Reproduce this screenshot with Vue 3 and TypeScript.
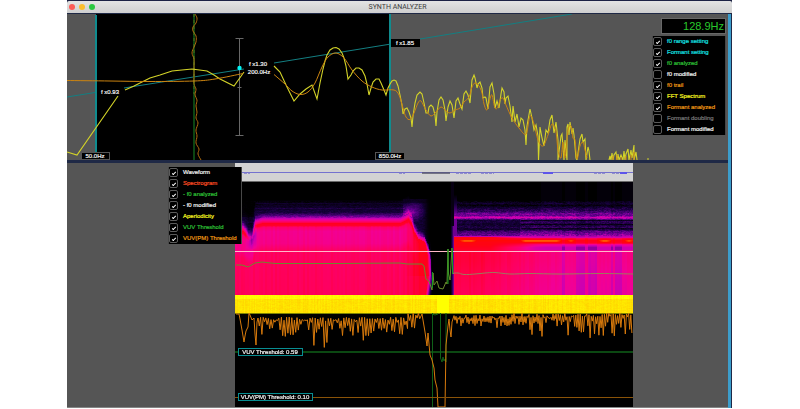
<script setup lang="ts">
import { onMounted, reactive, ref } from 'vue'

interface Layer {
  id: string
  label: string
  tone: string
  on: boolean
}
type Point = [number, number]

const analysisLayers = reactive<Layer[]>([
  { id: 'range', label: 'f0 range setting', tone: 'cyan', on: true },
  { id: 'formant', label: 'Formant setting', tone: 'cyan', on: true },
  { id: 'f0', label: 'f0 analyzed', tone: 'green', on: true },
  { id: 'f0mod', label: 'f0 modified', tone: 'white', on: false },
  { id: 'trail', label: 'f0 trail', tone: 'orange', on: true },
  { id: 'fft', label: 'FFT Spectrum', tone: 'yellow', on: true },
  { id: 'envelope', label: 'Formant analyzed', tone: 'orange', on: true },
  { id: 'doubling', label: 'Formant doubling', tone: 'gray', on: false },
  { id: 'envmod', label: 'Formant modified', tone: 'white', on: false },
])

const timelineLayers = reactive<Layer[]>([
  { id: 'wave', label: 'Waveform', tone: 'white', on: true },
  { id: 'spectrogram', label: 'Spectrogram', tone: 'red', on: true },
  { id: 'tf0', label: '- f0 analyzed', tone: 'green', on: true },
  { id: 'tf0mod', label: '- f0 modified', tone: 'white', on: true },
  { id: 'aperiodicity', label: 'Aperiodicity', tone: 'yellow', on: true },
  { id: 'vuv', label: 'VUV Threshold', tone: 'green', on: true },
  { id: 'vuvpm', label: 'VUV(PM) Threshold', tone: 'orange', on: true },
])

const on = (list: Layer[], id: string) => list.some((l) => l.id === id && l.on)

function line(points: Point[]): string {
  return 'M' + points.map((p) => `${p[0].toFixed(1)} ${p[1].toFixed(1)}`).join('L')
}

// Catmull-Rom spline through the points.
function curve(p: Point[]): string {
  let d = `M${p[0][0]} ${p[0][1]}`
  for (let i = 0; i < p.length - 1; i++) {
    const a = p[Math.max(0, i - 1)]
    const b = p[i]
    const c = p[i + 1]
    const e = p[Math.min(p.length - 1, i + 2)]
    d += `C${(b[0] + (c[0] - a[0]) / 6).toFixed(1)} ${(b[1] + (c[1] - a[1]) / 6).toFixed(1)} ${(c[0] - (e[0] - b[0]) / 6).toFixed(1)} ${(c[1] - (e[1] - b[1]) / 6).toFixed(1)} ${c[0]} ${c[1]}`
  }
  return d
}

function generator(seed: number) {
  let s = seed
  return () => {
    s = (s * 1664525 + 1013904223) % 4294967296
    return s / 4294967296
  }
}

const fftLow = line([[67, 152], [77, 155], [118, 96]]) + line([
  [125, 90], [134, 86], [142, 82], [150, 78], [160, 75], [172, 71], [182, 70], [192, 69], [207, 71], [214, 75], [220, 79], [234, 86], [244, 72],
])
const fftHigh = line([
  [274, 66], [280, 72], [287, 87], [294, 101], [300, 94], [306, 89], [312, 85], [317, 99], [320, 83], [323, 69], [325, 61], [327, 55], [330, 50], [333, 48], [336, 47.5], [339, 49], [342, 53], [344, 58], [346, 66], [348, 79], [351, 75], [353, 71], [356, 68], [359, 68], [362, 70], [365, 76], [367, 84], [369, 95], [371, 88], [373, 82], [376, 79], [379, 79], [381, 83], [384, 90], [386, 95], [388, 88],
  [390, 84], [392, 81], [394, 80], [396, 81], [398, 86], [400, 95], [402, 105], [403, 114], [405, 109], [407, 108], [409, 112], [411, 118], [412, 127], [413, 116], [415, 103], [417, 95], [420, 92], [422, 94], [424, 103], [426, 113], [428, 113],
  [429, 107], [431, 105], [433, 107], [435, 115], [436, 126], [437, 112], [439, 100], [441, 97], [443, 100], [445, 110], [446, 121], [448, 107], [450, 101], [452, 105], [454, 118], [456, 101], [458, 98], [460, 104], [462, 109], [464, 94], [466, 91], [468, 95], [470, 103], [472, 80], [474, 75], [475, 78], [477, 88], [478, 84], [480, 82], [482, 88], [483, 98], [485, 97], [486, 98], [488, 109],
  [490, 87], [492, 83], [494, 94], [495, 108], [497, 101], [499, 108], [501, 94], [502, 88], [504, 92], [505, 104], [506, 98], [508, 96], [510, 106], [512, 122], [513, 106], [515, 122], [517, 114], [519, 127], [521, 118], [523, 120], [525, 130], [526, 145], [527, 126], [528, 120], [530, 109], [532, 118], [534, 130], [536, 125], [538, 136], [538.5, 160], [540, 127], [542, 138], [544, 146], [546, 130], [548, 133], [550, 120],
  [552, 115], [554, 133], [556, 122], [558, 140], [558, 160], [561, 136], [562, 134], [564, 160], [565, 140], [567, 160], [567, 127], [568, 124], [569, 135], [570, 122], [572, 134], [573, 128], [574, 135], [576, 158], [577, 160], [580, 139], [582, 134], [583, 142], [585, 139], [586, 160], [588, 147], [589, 151], [590, 160],
])
const fftTail = line([
  [609, 160], [610, 156], [611, 160], [612, 153], [613, 160], [614, 155], [616, 152], [617, 160], [618, 154], [619, 160], [621, 155], [623, 160], [624, 151], [625, 160], [626, 154], [628, 149], [629, 160], [631, 150], [632, 158], [634, 145], [634, 160], [636, 152], [637, 160],
])
const envLow = curve([[67, 80.5], [110, 81], [150, 81.5], [194, 81], [215, 79], [243, 73.5]])
const envHigh = curve([
  [274, 74.5], [285, 84], [292, 91], [300, 94.5], [308, 92], [315, 83], [322, 67], [328, 57], [336, 53], [344, 58], [352, 70], [362, 81], [372, 87], [382, 90], [394, 90], [399, 95], [403, 108], [406, 117], [410, 119.5], [414, 113], [418, 103], [421, 101], [426, 110], [431, 116], [436, 112], [441, 107], [446, 111], [450, 113], [455, 110], [460, 108], [464, 102], [469, 97],
  [472, 87], [475, 83], [479, 86], [482, 93], [484, 104], [487, 110], [490, 99], [492, 95], [495, 108], [498, 107], [500, 100], [503, 98], [506, 105], [512, 118], [519, 128], [526, 134], [530, 116], [534, 124], [538, 140], [543, 146], [548, 135], [552, 124], [556, 132], [558, 150], [561, 158], [563, 142], [565, 158], [568, 130], [571, 126], [573, 138], [575, 140], [577, 159], [580, 146], [583, 142], [585, 150], [587, 158],
])

const trail = curve([
  [195, 14], [197, 18], [196, 23], [193, 27], [193, 31], [196, 36], [196, 42], [194, 47], [192, 53], [194, 59], [194, 66], [194, 75], [194, 84], [196, 89], [195, 95], [197, 100], [196, 106], [197, 112], [196, 118], [198, 123], [196, 130], [197, 136], [196, 143], [199, 149], [198, 154], [201, 160],
])

const f0Timeline = line([
  [236, 265], [242, 265], [248, 267], [255, 263], [262, 262], [275, 263.5], [340, 263.5], [400, 263], [407, 264], [422, 264], [424, 266], [426, 279], [429, 281], [432, 290], [433, 273], [434, 285], [437, 281], [439, 288], [443, 289], [446, 282], [447, 284], [448, 249], [448.5, 274], [450, 280], [452, 248], [453, 274],
])
const f0Right = curve([[452, 273.5], [458, 273], [464, 274.5], [475, 274], [485, 273], [495, 272.5], [510, 274], [530, 273.5], [560, 274], [600, 273.5], [633, 274]])

function periodicity(): string {
  const rnd = generator(11)
  const pts: Point[] = [[236, 314], [239, 314], [240, 319], [242, 330], [244, 342], [245, 336], [246, 331], [248, 327], [249, 313], [250, 315], [252, 320], [254, 318], [255, 334], [256, 345], [257, 322]]
  const spread = (from: number, to: number, step: number, base: number, dip: number, rare: number) => {
    for (let x = from; x < to; x += step) {
      pts.push([x, base + rnd() * 4])
      const depth = rnd() < 0.1 ? rare * (0.7 + rnd() * 0.4) : dip * rnd()
      pts.push([x + step / 2, base + 3 + depth])
    }
  }
  spread(258, 408, 2.6, 317, 17, 28)
  spread(408, 421, 2.6, 313, 5, 11)
  pts.push([422, 314], [424, 326], [425, 332], [427, 346], [428, 333], [430, 355], [432, 360], [434, 368], [435, 380], [437, 388], [438, 407], [445, 407], [446, 345], [448, 326], [449, 319], [450, 330], [451, 337], [452, 322])
  spread(454, 512, 2, 315, 8, 9)
  spread(512, 525, 2, 313, 9, 14)
  spread(525, 543, 2, 314, 20, 24)
  spread(543, 556, 2, 314, 4, 8)
  spread(556, 632, 2.2, 313, 20, 24)
  return line(pts)
}
const periodicityPath = periodicity()

const palette: [number, number, number, number][] = [
  [0, 0, 0, 0],
  [0.2, 22, 0, 60],
  [0.4, 95, 0, 140],
  [0.55, 200, 0, 180],
  [0.68, 242, 0, 150],
  [0.8, 255, 0, 90],
  [0.9, 255, 0, 30],
  [0.95, 255, 10, 0],
  [1, 255, 90, 0],
]
function shade(v: number): [number, number, number] {
  const t = Math.min(1, Math.max(0, v))
  for (let i = 1; i < palette.length; i++) {
    if (t <= palette[i][0]) {
      const a = palette[i - 1]
      const b = palette[i]
      const k = (t - a[0]) / (b[0] - a[0])
      return [a[1] + (b[1] - a[1]) * k, a[2] + (b[2] - a[2]) * k, a[3] + (b[3] - a[3]) * k]
    }
  }
  return [255, 90, 0]
}
// Piecewise linear lookup.
function lerp(x: number, pts: Point[]): number {
  if (x <= pts[0][0]) return pts[0][1]
  for (let i = 1; i < pts.length; i++) {
    if (x <= pts[i][0]) {
      const k = (x - pts[i - 1][0]) / (pts[i][0] - pts[i - 1][0])
      return pts[i - 1][1] + (pts[i][1] - pts[i - 1][1]) * k
    }
  }
  return pts[pts.length - 1][1]
}

const voicedEdge: Point[] = [[236, 225], [243, 227], [248, 233], [252, 231], [255, 221], [262, 219], [400, 219], [404, 217], [408, 215], [411, 219], [414, 229], [418, 236], [424, 239], [428, 246], [430, 256], [431, 275], [429, 296]]
const voicedBody: Point[] = [[-20, 0], [-14, 0.11], [-7, 0.2], [-4, 0.36], [-1, 0.55], [1, 0.7], [3, 0.82], [4, 0.9], [6, 0.88], [8, 0.76], [12, 0.7], [24, 0.71], [31, 0.79], [70, 0.8]]
const rightBody: Point[] = [[200, 0], [203, 0.13], [205, 0.04], [208, 0.2], [211, 0.28], [213, 0.42], [215, 0.42], [216, 0.5], [217, 0.6], [218, 0.5], [220, 0.25], [222, 0.27], [224, 0.2], [227, 0.28], [229, 0.2], [231, 0.38], [235, 0.48], [237, 0.6], [238, 0.84], [240, 0.94], [242, 0.92], [244, 0.8], [247, 0.66], [249, 0.66], [252, 0.76], [258, 0.76], [275, 0.73], [295, 0.71]]
const stripes: Point[] = [[562, 565], [576, 585], [588, 597], [611, 613], [615, 622]]
const embers: Point[] = [[458, 477], [519, 562], [566, 575], [597, 612], [623, 634]]

function spectrogramLevel(x: number, y: number, n: number, column: number): number {
  if (x < 433) {
    const d = y - lerp(x, voicedEdge)
    let v = lerp(d, voicedBody)
    if (d < -1 && y > 200) v += (n - 0.5) * 0.13
    if (x < 254 && y < 217) v *= 0.4
    if (x > 254 && x < 405 && (y === 203 || y === 208)) v += 0.07
    if (x > 244 && x < 258 && y > 222 && y < 249) {
      v -= 0.4 * Math.max(0, 1 - Math.abs(x - 251) / 6) * Math.max(0, 1 - Math.abs(y - 235) / 15)
    }
    if (x > 402 && x < 430 && d < -2 && y > 198) {
      const near = Math.max(0, 1 - Math.hypot(x - 412, (y - 211) * 1.2) / 14)
      v = Math.max(v, 0.1 + n * 0.12) * Math.max(0, Math.min(1, (430 - x) / 8)) + near * 0.3
      if (y < 203) v *= 0.6
    }
    if (x > 404 && d > 2) v += (0.9 - v) * Math.min(1, (x - 404) / 14) * (y > 275 ? 0.7 : 1)
    const fade = lerp(y, [[180, 430], [240, 428], [255, 431], [275, 432], [295, 429]])
    if (x > fade - 4) v *= Math.max(0, 1 - (x - fade + 4) / 6)
    return v + (d > 6 ? (column - 0.5) * 0.035 : 0)
  }
  if (x < 451) return 0
  if (x < 454) return y > 225 ? 0.42 - (453 - x) * 0.14 : 0.06
  let v = lerp(y, rightBody)
  if (y > 200 && y < 236) v += (n - 0.5) * 0.2
  if (y < 212 && x > 540) v += 0.03
  if (y > 218 && y < 236 && x < 520) v -= 0.07
  if (y > 218 && y < 231 && x > 520 && y % 4 === 0) v -= 0.13
  if (y > 236 && y < 252) {
    const warm = 0.92 - Math.max(0, y - 244) * 0.007
    v += Math.max(0, warm - v) * lerp(x, [[490, 1], [535, 0]])
  }
  if (y >= 252) v += lerp(x, [[455, 0.1], [480, 0.1], [520, 0.03], [560, -0.04], [634, -0.05]])
  if (y > 237 && y < 243) {
    const heatBand = embers.reduce((m, s) => Math.max(m, Math.min(1, Math.max(0, Math.min(x - s[0], s[1] - x) / 6))), 0)
    v += heatBand * (y === 240 || y === 241 ? 0.06 : 0.02)
  }
  if (y > 243 && y < 250 && x > 520) v -= 0.09 * Math.min(1, (x - 520) / 25)
  if (stripes.some((s) => x >= s[0] && x < s[1])) v -= y > 244 ? 0.1 : 0.03
  if (x < 457 && y < 238) v = Math.max(v, 0.42 * Math.min(1, Math.max(0, (y - 194) / 20)))
  return v + (y > 250 ? (column - 0.5) * 0.03 : 0)
}

const heat = ref<HTMLCanvasElement | null>(null)
onMounted(() => {
  const ctx = heat.value?.getContext('2d')
  if (!ctx) return
  const image = ctx.createImageData(398, 132)
  const rnd = generator(5)
  const columns = Array.from({ length: 398 }, () => rnd())
  for (let row = 0; row < 132; row++) {
    let n = 0.5
    for (let col = 0; col < 398; col++) {
      n = n * 0.45 + rnd() * 0.55
      const y = row + 182
      let c: [number, number, number]
      if (y < 295) c = shade(spectrogramLevel(col + 235, y, n, columns[Math.floor(col / 2)]))
      else if (col > 201 && col < 214) c = [255, 255, 0]
      else c = [255, (y < 299 ? 232 : 208) + columns[col] * 15 + n * 22, 0]
      const i = (row * 398 + col) * 4
      image.data[i] = c[0]
      image.data[i + 1] = c[1]
      image.data[i + 2] = c[2]
      image.data[i + 3] = 255
    }
  }
  ctx.putImageData(image, 0, 19)
})
</script>

<template>
  <main class="window">
    <header class="titlebar">
      <div class="lights">
        <button class="light close" type="button" aria-label="Close"></button>
        <button class="light minimize" type="button" aria-label="Minimize"></button>
        <button class="light zoom" type="button" aria-label="Zoom"></button>
      </div>
      <h1 class="title">SYNTH ANALYZER</h1>
    </header>

    <div class="body">
      <section class="analysis">
        <svg class="plot" viewBox="67 14 661 146">
          <rect x="67" y="14" width="661" height="146" fill="#555" />
          <g v-if="on(analysisLayers, 'range')">
            <rect x="96" y="14" width="294" height="146" fill="#000" />
            <rect x="95" y="15" width="2" height="137" fill="#108b8e" />
            <rect x="389" y="14" width="2" height="138" fill="#108b8e" />
          </g>
          <g v-if="on(analysisLayers, 'formant')" fill="none">
            <path d="M67 97L95 92.500M124 88L244 69M274 63L391 44M420 39L572 14" stroke="#137f82" />
            <path d="M239.500 38V136M235.500 38.500h8M237.500 87.500h4M235.500 135.500h8" stroke="#686868" />
          </g>
          <path v-if="on(analysisLayers, 'f0')" d="M194 14V160" stroke="#115c18" stroke-width="1.500" />
          <path v-if="on(analysisLayers, 'trail')" :d="trail" fill="none" stroke="#b06b0e" />
          <path v-if="on(analysisLayers, 'f0')" d="M194 14V94" stroke="#788922" stroke-width=".6" stroke-dasharray="3 3" />
          <g v-if="on(analysisLayers, 'fft')" fill="none" stroke="#d4d428" stroke-width="1.100">
            <path :d="fftLow" />
            <path :d="fftHigh" />
            <path :d="fftTail" />
            <path d="M647 159h2" />
          </g>
          <g v-if="on(analysisLayers, 'envelope')" fill="none" stroke="#cc8410">
            <path :d="envLow" />
            <path :d="envHigh" />
            <path d="M613 160v-4M617 160v-5M621 160v-3M626 160v-4M631 160v-5M634 160v-8" />
          </g>
          <circle cx="239.500" cy="68" r="2.200" fill="#00f6f6" />
          <g class="tag">
            <rect x="391" y="39" width="29" height="8" fill="#000" />
            <rect x="81.500" y="152.500" width="28" height="7" fill="#000" stroke="#555" />
            <rect x="375.500" y="152.500" width="29" height="7" fill="#000" stroke="#555" />
            <text x="110" y="94">f x0.93</text>
            <text x="258" y="66">f x1.30</text>
            <text x="259" y="74">200.0Hz</text>
            <text x="405" y="45">f x1.85</text>
            <text x="95" y="158">50.0Hz</text>
            <text x="390" y="158">850.0Hz</text>
          </g>
        </svg>
        <aside class="readouts">
          <output class="frequency">128.9Hz</output>
          <div class="legend">
            <label v-for="layer in analysisLayers" :key="layer.id" class="layer" :class="layer.tone">
              <input v-model="layer.on" class="tick" type="checkbox" />
              <span>{{ layer.label }}</span>
            </label>
          </div>
        </aside>
      </section>

      <section class="timeline">
        <div class="legend timeline-legend">
          <label v-for="layer in timelineLayers" :key="layer.id" class="layer" :class="layer.tone">
            <input v-model="layer.on" class="tick" type="checkbox" />
            <span>{{ layer.label }}</span>
          </label>
        </div>
        <div class="stage">
          <canvas v-show="on(timelineLayers, 'spectrogram')" ref="heat" class="heat" width="398" height="244"></canvas>
          <svg class="plot overlay" viewBox="235 163 398 244">
            <rect x="235" y="163" width="398" height="18.500" fill="#d3d3d3" />
            <g v-if="on(timelineLayers, 'wave')">
              <path d="M235 172.500H633" stroke="#7472cf" />
              <path d="M422 173H450" stroke="#55556a" stroke-width="1.500" />
              <path d="M244 173h6M399 173h6M456 173h16M481 173h13M594 173h12M612 173h16" stroke="#7b77cc" stroke-width="1.500" stroke-dasharray="3 1" />
              <path d="M543 173h10M620 173h7" stroke="#5e55ea" stroke-width="2" />
            </g>
            <path v-if="on(timelineLayers, 'tf0mod')" d="M235 251.500H633" stroke="#ffb9c9" />
            <g v-if="on(timelineLayers, 'tf0')" fill="none">
              <path :d="f0Timeline" stroke="#6b8a2c" />
              <path :d="f0Right" stroke="#9a7c5c" />
              <path d="M448 249V284M452.500 248V274M432.500 272V288" stroke="#159a20" />
            </g>
            <g v-if="on(timelineLayers, 'vuv')" fill="none" stroke="#0f6018">
              <path d="M235 313.500H633" stroke="#5d6a00" stroke-width=".8" />
              <path d="M235 352H633" stroke-width="1.500" />
              <path d="M432.500 313V407M432 314L435 315L438 314M440.500 313V358L442 362L443 357L444 361L445 359L446 362V313" />
            </g>
            <g v-if="on(timelineLayers, 'vuvpm')" fill="none">
              <path :d="periodicityPath" stroke="#d87a0c" />
              <path d="M235 397.500H633" stroke="#8a5308" />
            </g>
            <g class="tag">
              <rect x="238.500" y="348.500" width="64" height="7" fill="#000" stroke="#088e92" />
              <rect x="238.500" y="393.500" width="74" height="7" fill="#000" stroke="#088e92" />
              <text x="270" y="354">VUV Threshold: 0.59</text>
              <text x="275" y="399">VUV(PM) Threshold: 0.10</text>
            </g>
          </svg>
        </div>
      </section>
    </div>
  </main>
</template>

<style>
body {
  margin: 0;
  background: #fff;
}
</style>

<style scoped>
.window {
  margin: 0 68px 0 67px;
  background: #1f2946;
  border-top: 1px solid #1c2144;
  font-family: "Liberation Sans", Arial, sans-serif;
}
.titlebar {
  display: grid;
  grid-template-columns: 1fr auto 1fr;
  align-items: center;
  height: 12px;
  padding: 0 6px 0 2px;
  background: linear-gradient(#e3e3e3, #cfcfcf);
  border-radius: 2px 2px 0 0;
}
.lights {
  display: flex;
  gap: 4px;
}
.light {
  width: 6px;
  height: 6px;
  padding: 0;
  border: 0;
  border-radius: 50%;
}
.close {
  background: #fc5b57;
}
.minimize {
  background: #fbbd2e;
}
.zoom {
  background: #2bc840;
}
.title {
  margin: 0;
  color: #3c3c3c;
  font-family: Roboto, "Liberation Sans", sans-serif;
  font-size: 7px;
  line-height: 8px;
  font-weight: 400;
}
.body {
  display: flex;
  flex-direction: column;
  gap: 3px;
  margin: 1px 1px 0 0;
  border-right: 3px solid #3c9dcb;
}
.analysis {
  position: relative;
}
.plot {
  display: block;
  width: 100%;
  height: auto;
}
.readouts {
  position: absolute;
  top: 4px;
  right: 2px;
  display: flex;
  flex-direction: column;
  align-items: flex-end;
  gap: 2px;
}
.frequency {
  box-sizing: border-box;
  width: 65px;
  height: 16px;
  padding-right: 1px;
  border: 1px solid #686868;
  background: #000;
  color: #28c92c;
  font-size: 11px;
  line-height: 15px;
  text-align: right;
}
.legend {
  box-sizing: border-box;
  width: 74px;
  background: #000;
  border: 1px solid #484848;
  border-width: 0 1px;
  font-size: 6px;
}
.layer {
  display: flex;
  align-items: center;
  gap: 5px;
  height: 11px;
  line-height: 11px;
  white-space: nowrap;
  -webkit-text-stroke: 0.2px currentColor;
}
.tick {
  appearance: none;
  box-sizing: border-box;
  display: grid;
  place-items: center;
  flex: none;
  width: 9px;
  height: 9px;
  margin: 0;
  border: 1px solid #5c5c5c;
  border-radius: 2px;
}
.tick:checked::after {
  content: "";
  width: 4px;
  height: 2px;
  border: solid #fff;
  border-width: 0 0 1px 1px;
  box-sizing: border-box;
  transform: rotate(-45deg);
}
.cyan { color: #14e0e4; }
.green { color: #2ec036; }
.white { color: #f2f2f2; }
.orange { color: #f09a14; }
.yellow { color: #f8f820; }
.gray { color: #7a7a7a; }
.red { color: #ff4e24; }
.timeline {
  display: grid;
  grid-template-columns: 168fr 398fr 95fr;
  align-items: start;
  background: #555;
  border-bottom: 1px solid #858585;
}
.timeline-legend {
  position: relative;
  z-index: 1;
  justify-self: end;
  margin: 4px -7px 0 0;
}
.stage {
  position: relative;
  background: #000;
}
.heat {
  display: block;
  width: 100%;
}
.overlay {
  position: absolute;
  inset: 0;
}
.tag text {
  fill: #f4f4f4;
  stroke: #f4f4f4;
  stroke-width: 0.2;
  font-size: 6px;
  text-anchor: middle;
}
</style>
